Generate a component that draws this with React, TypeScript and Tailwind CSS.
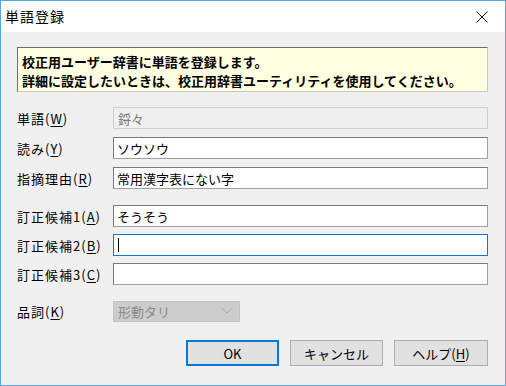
import React from 'react';

const font = "font-['Noto_Sans_CJK_JP','Noto_Sans',sans-serif]";

const Key = ({ k }: { k: string }) => (
  <>
    (<span className="underline underline-offset-2">{k}</span>)
  </>
);

const Row = ({ label, children }: { label: React.ReactNode; children: React.ReactNode }) => (
  <div className="flex items-center h-[22px]">
    <div className="w-[96px] text-[13px] leading-none tracking-[1px] text-black">{label}</div>
    {children}
  </div>
);

const Field = ({ value, focused }: { value?: string; focused?: boolean }) => (
  <div
    className={
      'flex items-center w-[375px] h-[22px] bg-white px-[3px] text-[13px] leading-none text-black border ' +
      (focused ? 'border-[#0078d7]' : 'border-[#7a7a7a] border-r-[#a0a0a0] border-b-[#a0a0a0]')
    }
  >
    {value}
    {focused && <div className="w-px h-[14px] bg-black ml-[1px]" />}
  </div>
);

export default function App() {
  return (
    <div className={`${font} w-[506px] h-[386px] bg-[#f0f0f0] border border-[#5aa7e0] flex flex-col`}>
      {/* Title bar */}
      <div className="h-[31px] bg-white flex items-center justify-between pl-[4px] pr-[17px]">
        <span className="text-[14px] tracking-[1px] text-black">単語登録</span>
        <svg width="12" height="12" viewBox="0 0 12 12">
          <path d="M0.5 0.5 L11.5 11.5 M11.5 0.5 L0.5 11.5" stroke="#111" strokeWidth="1" />
        </svg>
      </div>

      <div className="flex flex-col px-[16px] pt-[15px]">
        {/* Info */}
        <div className="w-[471px] h-[45px] bg-[#ffffe1] border border-[#6d6d6d] border-r-[#c8c8c8] border-b-[#c8c8c8] pl-[4px] pt-[4px] text-[13px] font-bold leading-[19px] text-black">
          <div>校正用ユーザー辞書に単語を登録します。</div>
          <div>詳細に設定したいときは、校正用辞書ユーティリティを使用してください。</div>
        </div>

        <div className="flex flex-col gap-[8px] mt-[15px]">
          <Row label={<>単語<Key k="W" /></>}>
            <div className="flex items-center w-[375px] h-[22px] bg-[#f0f0f0] border border-[#cfcfcf] px-[4px] text-[13px] leading-none text-[#7a7a7a]">
              鋝々
            </div>
          </Row>
          <Row label={<>読み<Key k="Y" /></>}>
            <Field value="ソウソウ" />
          </Row>
          <Row label={<>指摘理由<Key k="R" /></>}>
            <Field value="常用漢字表にない字" />
          </Row>
        </div>

        <div className="flex flex-col gap-[7px] mt-[16px]">
          <Row label={<>訂正候補1<Key k="A" /></>}>
            <Field value="そうそう" />
          </Row>
          <Row label={<>訂正候補2<Key k="B" /></>}>
            <Field focused />
          </Row>
          <Row label={<>訂正候補3<Key k="C" /></>}>
            <Field />
          </Row>
        </div>

        <div className="mt-[15px]">
          <Row label={<>品詞<Key k="K" /></>}>
            <div className="flex items-center justify-between w-[127px] h-[21px] bg-[#cccccc] border border-[#c4c4c4] pl-[4px] pr-[7px] text-[13px] leading-none text-[#8a8a8a]">
              形動タリ
              <svg width="10" height="6" viewBox="0 0 10 6">
                <path d="M0.5 0.5 L5 5 L9.5 0.5" fill="none" stroke="#a8a8a8" strokeWidth="1" />
              </svg>
            </div>
          </Row>
        </div>

        {/* Buttons */}
        <div className="flex justify-end gap-[11px] mt-[18px] pr-[1px]">
          <button className="w-[93px] h-[26px] bg-[#e1e1e1] border-2 border-[#0078d7] text-[13px] leading-none text-black">
            OK
          </button>
          <button className="w-[93px] h-[26px] bg-[#e1e1e1] border border-[#adadad] text-[13px] leading-none text-black">
            キャンセル
          </button>
          <button className="w-[94px] h-[26px] bg-[#e1e1e1] border border-[#adadad] text-[13px] leading-none text-black">
            ヘルプ<Key k="H" />
          </button>
        </div>
      </div>
    </div>
  );
}
